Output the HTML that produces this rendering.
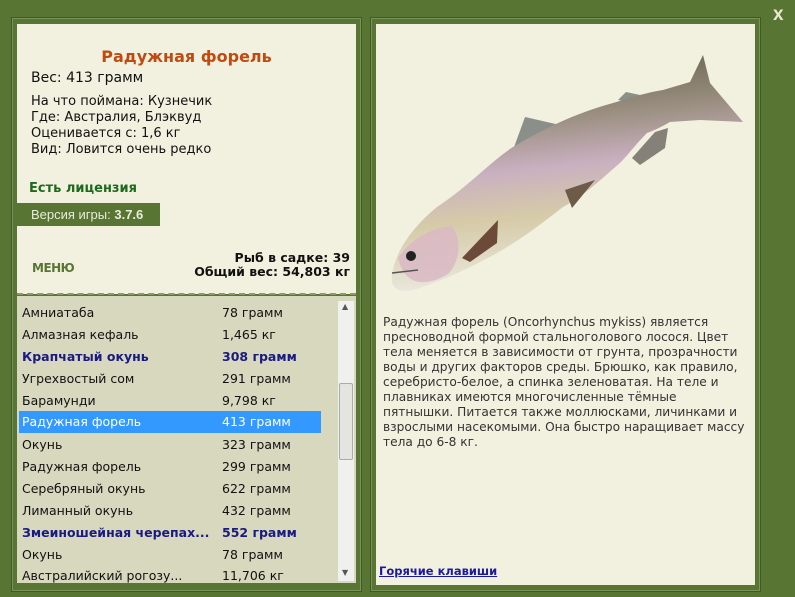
<!DOCTYPE html>
<html><head><meta charset="utf-8"><style>
*{margin:0;padding:0;box-sizing:border-box}
body{width:795px;height:597px;background:#587534;position:relative;overflow:hidden;font-family:"DejaVu Sans","Liberation Sans",sans-serif;color:#111}
.frame{position:absolute;border:1px solid #3f5a22;box-shadow:inset 0 0 0 1px #7a935a}
.cream{position:absolute;background:#f2f1df}
.abs{position:absolute;white-space:nowrap}
.row{position:absolute;left:17px;width:320px;height:22px;font-size:12.5px;line-height:22px}
.row span{position:absolute}
.row .n{left:5px}.row .v{left:205px}
.b{color:#1a1a80;font-weight:bold}
.sel{background:#3399ff;color:#fff}
</style></head><body>
<div class="frame" style="left:11px;top:17px;width:351px;height:575px"></div>
<div class="cream" style="left:17px;top:24px;width:339px;height:270px"></div>
<div style="position:absolute;left:17px;top:293px;width:339px;border-top:2px dashed #8a9a68"></div>
<div style="position:absolute;left:17px;top:296px;width:339px;height:287px;background:#d8d8be"></div>
<div class="abs" style="left:0;width:373px;text-align:center;top:47px;font-size:16px;font-weight:bold;color:#c04a10">Радужная форель</div>
<div class="abs" style="left:31px;top:70px;font-size:14px">Вес: 413 грамм</div>
<div class="abs" style="left:31px;top:94px;font-size:13px;line-height:16px">На что поймана: Кузнечик<br>Где: Австралия, Блэквуд<br>Оценивается с: 1,6 кг<br>Вид: Ловится очень редко</div>
<div class="abs" style="left:29px;top:181px;font-size:13px;font-weight:bold;color:#1d6a1d">Есть лицензия</div>
<div class="abs" style="left:17px;top:203px;width:143px;height:23px;background:#587534;color:#e8ecd8;font-family:'Liberation Sans',sans-serif;font-size:13px;line-height:23px;padding-left:14px">Версия игры: <b>3.7.6</b></div>
<div class="abs" style="left:32px;top:261px;font-size:12px;font-weight:900;color:#587534;letter-spacing:-0.5px">МЕНЮ</div>
<div class="abs" style="right:445px;top:251px;font-size:12.5px;font-weight:bold;text-align:right;line-height:14px">Рыб в садке: 39<br>Общий вес: 54,803 кг</div>
<div class="row" style="top:302px"><span class="n">Амниатаба</span><span class="v">78 грамм</span></div>
<div class="row" style="top:324px"><span class="n">Алмазная кефаль</span><span class="v">1,465 кг</span></div>
<div class="row b" style="top:346px"><span class="n">Крапчатый окунь</span><span class="v">308 грамм</span></div>
<div class="row" style="top:368px"><span class="n">Угрехвостый сом</span><span class="v">291 грамм</span></div>
<div class="row" style="top:390px"><span class="n">Барамунди</span><span class="v">9,798 кг</span></div>
<div class="row sel" style="top:411px;width:302px;left:19px"><span class="n" style="left:3px">Радужная форель</span><span class="v" style="left:203px">413 грамм</span></div>
<div class="row" style="top:434px"><span class="n">Окунь</span><span class="v">323 грамм</span></div>
<div class="row" style="top:456px"><span class="n">Радужная форель</span><span class="v">299 грамм</span></div>
<div class="row" style="top:478px"><span class="n">Серебряный окунь</span><span class="v">622 грамм</span></div>
<div class="row" style="top:500px"><span class="n">Лиманный окунь</span><span class="v">432 грамм</span></div>
<div class="row b" style="top:522px"><span class="n">Змеиношейная черепах...</span><span class="v">552 грамм</span></div>
<div class="row" style="top:544px"><span class="n">Окунь</span><span class="v">78 грамм</span></div>
<div class="row" style="top:565px;height:18px;overflow:hidden"><span class="n">Австралийский рогозу...</span><span class="v">11,706 кг</span></div>
<div style="position:absolute;left:338px;top:301px;width:16px;height:280px;background:#f0f0ee"></div>
<div class="abs" style="left:342px;top:302px;font-size:8px;color:#555">▲</div>
<div class="abs" style="left:342px;top:568px;font-size:8px;color:#555">▼</div>
<div style="position:absolute;left:339px;top:383px;width:14px;height:77px;background:#e4e4e0;border:1px solid #aaa;border-radius:2px"></div>
<div class="frame" style="left:370px;top:17px;width:391px;height:575px"></div>
<div class="cream" style="left:376px;top:24px;width:379px;height:561px"></div>
<svg style="position:absolute;left:0;top:0" width="795" height="597">
<defs><linearGradient id="g" x1="0.2" y1="0" x2="0.35" y2="1"><stop offset="0" stop-color="#5f5a48"/><stop offset="0.3" stop-color="#9a8f80"/><stop offset="0.5" stop-color="#c9b0c0"/><stop offset="0.7" stop-color="#d6cba8"/><stop offset="1" stop-color="#ecebe4"/></linearGradient></defs>
<path d="M513,150 L525,117 L560,125 L545,145Z" fill="#8a8f8a"/>
<path d="M618,100 L626,92 L640,95 L636,103Z" fill="#8a8f8a"/>
<path d="M392,275 C395,250 415,225 437,207 C470,185 490,162 513,147 C550,125 580,112 613,103 C635,96 650,92 663,90 L690,82 L703,55 L710,83 L743,122 L700,120 L670,122 C660,128 650,132 647,133 C635,145 628,155 620,163 C600,180 585,195 563,207 C540,225 520,240 497,253 C470,268 440,282 413,290 C398,293 390,288 392,275Z" fill="url(#g)"/>
<path d="M655,132 L668,128 L665,148 L640,165 L632,158Z" fill="#858078"/>
<path d="M565,190 L595,180 L572,208Z" fill="#6e5a48"/>
<path d="M462,258 L498,220 L497,243 L470,262Z" fill="#6b4a3a"/>
<path d="M398,258 C410,240 430,228 452,226 C462,240 460,262 448,274 C428,286 405,288 398,258Z" fill="#d9b8c4" opacity="0.85"/>
<circle cx="411" cy="256" r="5" fill="#222"/>
<path d="M392,273 L418,270" stroke="#555" stroke-width="1.5"/>
</svg>
<div class="abs" style="left:383px;top:315px;font-size:12.2px;line-height:15px;color:#333">Радужная форель (Oncorhynchus mykiss) является<br>пресноводной формой стальноголового лосося. Цвет<br>тела меняется в зависимости от грунта, прозрачности<br>воды и других факторов среды. Брюшко, как правило,<br>серебристо-белое, а спинка зеленоватая. На теле и<br>плавниках имеются многочисленные тёмные<br>пятнышки. Питается также моллюсками, личинками и<br>взрослыми насекомыми. Она быстро наращивает массу<br>тела до 6-8 кг.</div>
<div class="abs" style="left:379px;top:564px;font-size:11.5px;font-weight:bold;color:#1a1aa0;text-decoration:underline">Горячие клавиши</div>
<div class="abs" style="left:773px;top:4px;font-size:19px;font-weight:900;color:#e8e8d0;font-family:'Liberation Sans',sans-serif">x</div>
</body></html>
